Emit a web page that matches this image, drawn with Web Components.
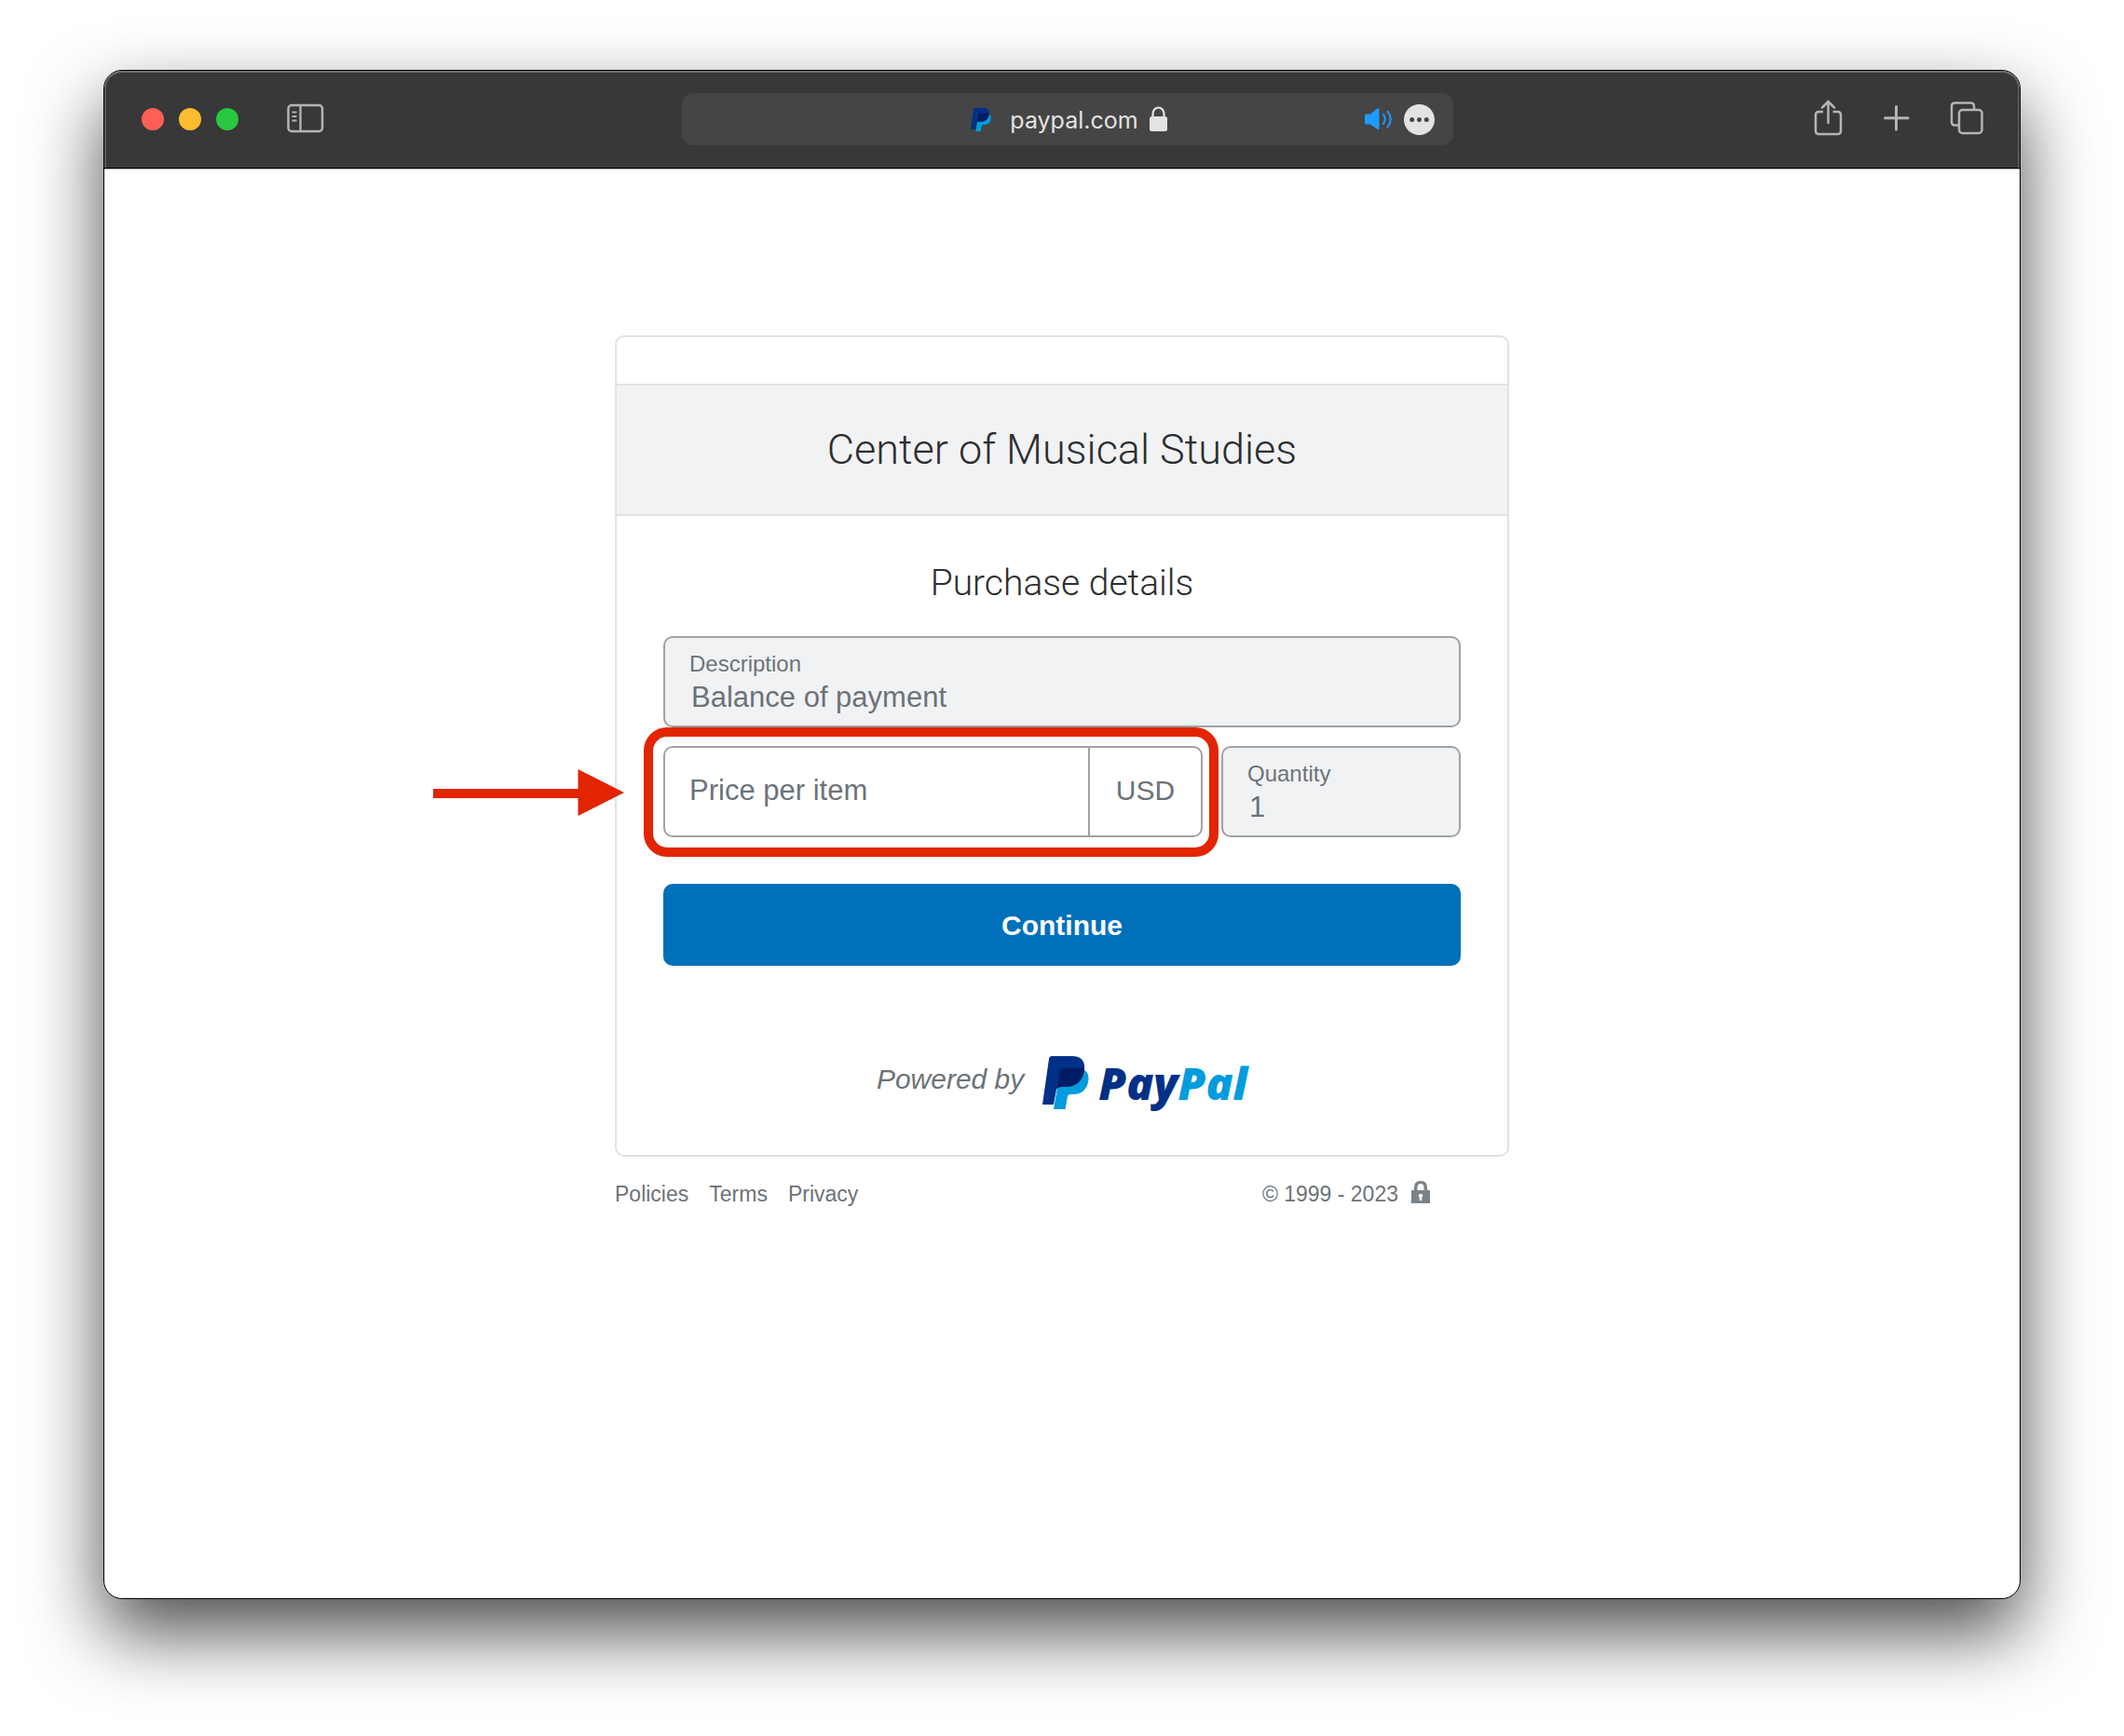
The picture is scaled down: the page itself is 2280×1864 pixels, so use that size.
<!DOCTYPE html>
<html lang="en">
<head>
<meta charset="utf-8">
<title>PayPal – Center of Musical Studies</title>
<style>
  html { background: #fff; }
  body {
    margin: 0;
    min-height: 100vh;
    box-sizing: border-box;
    padding: 75px 111px 147px;
    display: flex;
    font-family: "Liberation Sans", Arial, sans-serif;
    color: #6c7378;
  }
</style>
</head>
<body>
<browser-window>
  <browser-toolbar slot="toolbar" host="paypal.com"></browser-toolbar>
  <payment-page></payment-page>
</browser-window>

<script>
const define = (name, html, setup) => customElements.define(name, class extends HTMLElement {
  constructor() {
    super();
    this.attachShadow({ mode: 'open' }).innerHTML = html;
  }
  connectedCallback() { if (setup) setup(this, this.shadowRoot); }
});

/* PayPal double-P mark */
define('paypal-mark', `
<style>
  :host { display: block; flex: none; width: 50px; height: 57px; }
  svg { display: block; width: 100%; height: 100%; }
</style>
<svg viewBox="0 0 50 57" aria-hidden="true">
  <path fill="#009cde" d="M20 14H44C49 17 50.500 22 49 28C47 37 41 41 33 41H30Q27.500 41 27 43L24.500 57H12L16 34Z"/>
  <path fill="#003087" d="M7 3Q7.500 0 10 0H32C42 0 46 6 45 14C44 26 36 33 25 33H20Q16 33 15 36L12 52H0Z"/>
  <path fill="#001c64" d="M21 13H45C44.500 26 36 33 25 33H20Q17 33 15.500 35L18.500 15.500Q19 13 21 13Z"/>
</svg>`);

define('paypal-logo', `
<style>
  :host { display: flex; align-items: flex-start; gap: 10px; }
  .word {
    font: italic 800 48px/57px "Open Sans", Lato, sans-serif;
    color: #003087;
  }
  .pal { color: #009cde; }
</style>
<paypal-mark></paypal-mark>
<span class="word">Pay<span class="pal">Pal</span></span>`);

define('browser-window', `
<style>
  :host {
    display: flex; flex-direction: column; flex: 1;
    box-sizing: border-box;
    border: 1px solid #000;
    border-radius: 20px;
    background: #fff;
    box-shadow: 0 36px 80px rgba(0, 0, 0, .7);
    overflow: hidden;
  }
  main { flex: 1; }
</style>
<slot name="toolbar"></slot>
<main><slot></slot></main>`);

define('browser-toolbar', `
<style>
  :host {
    display: grid;
    grid-template-columns: 1fr minmax(0, 828px) 1fr;
    align-items: center;
    box-sizing: border-box;
    height: 105px;
    padding: 0 28px 0 40px;
    background: #383838;
    border-bottom: 1px solid #000;
    border-radius: 19px 19px 0 0;
    box-shadow: inset 0 2px #6e6e6e, inset 2px 0 #595959, inset -2px 0 #595959, 0 1px #b4b4b4;
  }
  button { all: unset; display: block; cursor: pointer; }
  svg { display: block; }
  .left, .lights, .right, .host, .tools { display: flex; align-items: center; }
  .left { gap: 50px; }
  .lights { gap: 16px; }
  .lights button { width: 24px; height: 24px; border-radius: 50%; background: var(--c); }
  .right { justify-content: flex-end; gap: 35px; padding-bottom: 2px; }
  .url {
    display: grid; grid-template-columns: 1fr auto 1fr; align-items: center;
    height: 56px; border-radius: 12px; background: #454545;
  }
  .host { grid-column: 2; gap: 12px; padding-left: 4px; font: 25px/32px Inter, sans-serif; color: #e3e3e3; }
  #host { padding-top: 2px; }
  .host paypal-mark { width: 22px; height: 25px; margin-right: 8px; }
  .tools { justify-content: flex-end; gap: 12px; padding-right: 20px; }
</style>
<div class="left">
  <div class="lights">
    <button style="--c:#ff5f57" aria-label="Close"></button>
    <button style="--c:#febc2e" aria-label="Minimise"></button>
    <button style="--c:#28c840" aria-label="Zoom"></button>
  </div>
  <button aria-label="Sidebar">
    <svg width="42" height="34" viewBox="0 0 42 34" fill="none" stroke="#b4b4b4">
      <rect x="3.500" y="2" width="36.500" height="28" rx="3.500" stroke-width="2.500"/>
      <path d="M16.500 2V30" stroke-width="2.400"/>
      <path d="M7.500 9.500H12.500M7.500 14H12.500M7.500 18.500H12.500" stroke-width="1.800"/>
    </svg>
  </button>
</div>
<div class="url">
  <div class="host">
    <paypal-mark></paypal-mark>
    <span id="host"></span>
    <svg width="20" height="28" viewBox="0 0 20 28" aria-hidden="true">
      <rect y="11" width="19" height="16" rx="2.500" fill="#e3e3e3"/>
      <path d="M3.500 12V8A6 6.500 0 0 1 15.500 8V12" fill="none" stroke="#e3e3e3" stroke-width="2.200"/>
    </svg>
  </div>
  <div class="tools">
    <button aria-label="Mute tab">
      <svg width="30" height="24" viewBox="0 0 30 24">
        <path fill="#1e9bff" d="M1.500 6.500H6L13 .800Q15.500-.500 15.500 2V21.500Q15.500 24 13 22.500L6 17.500H1.500Q0 17.500 0 16V8Q0 6.500 1.500 6.500Z"/>
        <path d="M20 7Q23.500 12 20 17M24.500 3.500Q31 12 24.500 20.500" fill="none" stroke="#1e9bff" stroke-width="2" stroke-linecap="round"/>
      </svg>
    </button>
    <button aria-label="Page menu">
      <svg width="33" height="33" viewBox="0 0 33 33">
        <circle cx="16.500" cy="16.500" r="16.500" fill="#e3e3e3"/>
        <g fill="#454545"><circle cx="8.700" cy="16.500" r="2.500"/><circle cx="16.500" cy="16.500" r="2.500"/><circle cx="24.300" cy="16.500" r="2.500"/></g>
      </svg>
    </button>
  </div>
</div>
<div class="right">
  <button aria-label="Share">
    <svg width="40" height="40" viewBox="0 0 40 40" fill="none" stroke="#b4b4b4" stroke-width="2.500">
      <path d="M15 13H10.500Q7 13 7 16.500V33.500Q7 37 10.500 37H30.500Q34 37 34 33.500V16.500Q34 13 30.500 13H25.500"/>
      <path d="M20.500 25V3M14 8.500L20.500 2L27 8.500" stroke-linecap="round"/>
    </svg>
  </button>
  <button aria-label="New tab">
    <svg width="40" height="40" viewBox="0 0 40 40" stroke="#b4b4b4" stroke-width="3" stroke-linecap="round">
      <path d="M18.500 7.500V32M6.500 19.700H31"/>
    </svg>
  </button>
  <button aria-label="Tab overview">
    <svg width="48" height="40" viewBox="0 0 48 40" fill="none" stroke="#b4b4b4" stroke-width="2.500">
      <path d="M27 11V7Q27 3.500 23.500 3.500H6.500Q3 3.500 3 7V24Q3 27.500 6.500 27.500H10"/>
      <rect x="11" y="11" width="24.500" height="25" rx="3.500"/>
    </svg>
  </button>
</div>`, (el, root) => { root.getElementById('host').textContent = el.getAttribute('host'); });

/* One bordered form field. A locked field stacks the label over its value. */
define('form-field', `
<style>
  :host {
    display: flex; align-items: stretch;
    box-sizing: border-box; height: 98px;
    border: 2px solid #9da3a6; border-radius: 10px;
    background: #fff; color: #6c7378;
    overflow: hidden;
  }
  :host([locked]) { background: #f1f2f4; }
  .body { flex: 1; min-width: 0; display: flex; align-items: center; padding: 0 26px 2px; gap: 12px; font-size: 31px; line-height: 36px; }
  :host([locked]) .body { flex-direction: column; align-items: stretch; justify-content: center; gap: 4px; padding: 2px 26px 0; }
  :host([locked]) label { font-size: 24px; line-height: 28px; }
  label { white-space: nowrap; }
  input {
    flex: 1; min-width: 0; width: 100%; box-sizing: border-box;
    border: 0; outline: 0; background: none; margin: 0; padding: 0;
    font: inherit; color: inherit;
  }
  :host([locked]) input { flex: none; height: 36px; padding-left: 2px; }
</style>
<div class="body"><label for="field"></label><input id="field" type="text"></div>
<slot></slot>`, (el, root) => {
  root.querySelector('label').textContent = el.getAttribute('label');
  const input = root.querySelector('input');
  input.value = el.getAttribute('value') || '';
  input.readOnly = el.hasAttribute('locked');
});

define('unit-tag', `
<style>
  :host {
    display: flex; align-items: center; justify-content: center;
    box-sizing: border-box; flex: none; width: 121px; padding-bottom: 2px;
    border-left: 2px solid #9da3a6;
    font-size: 30px; line-height: 36px;
  }
</style>
<slot></slot>`);

/* Red ring and arrow laid over the element it wraps */
define('call-out', `
<style>
  :host { display: block; position: relative; }
  .ring {
    position: absolute; inset: -20px -17px -21px -21px;
    border: 10px solid #e22400; border-radius: 25px;
    pointer-events: none;
  }
  svg { position: absolute; right: calc(100% + 42px); top: 25px; }
</style>
<slot></slot>
<div class="ring"></div>
<svg width="205" height="50" viewBox="0 0 205 50" fill="#e22400" aria-hidden="true">
  <path d="M0 21H155.500V0L205 25L155.500 50V31H0Z"/>
</svg>`);

define('site-footer', `
<style>
  :host { display: flex; justify-content: space-between; padding: 24px 85px 0 0; font-size: 23px; line-height: 32px; }
  nav { display: flex; gap: 22px; }
  a { color: inherit; text-decoration: none; }
  .legal { display: flex; align-items: center; gap: 14px; }
</style>
<nav><a href="#policies">Policies</a><a href="#terms">Terms</a><a href="#privacy">Privacy</a></nav>
<div class="legal"><span>© 1999 - 2023</span>
  <svg width="20" height="28" viewBox="0 0 20 28" aria-hidden="true">
    <path fill="#7b8388" d="M0 10H3V7Q3 0 10 0T17 7V10H20V24H0ZM6.500 10H13.500V7Q13.500 3 10 3T6.500 7ZM8.700 21H11.300V17.500Q12.300 17 12.300 15.800Q12 13.800 10 13.800T7.700 15.800Q7.700 17 8.700 17.500Z" fill-rule="evenodd"/>
  </svg>
</div>`);

define('payment-page', `
<style>
  :host { display: block; max-width: 960px; margin: 0 auto; padding: 179px 24px 24px; }
  .card { border: 2px solid #e1e2e3; border-radius: 10px; padding-top: 50px; }
  h1, h2 { margin: 0; font-family: Roboto, "Liberation Sans", sans-serif; font-weight: 300; color: #2c2e2f; text-align: center; }
  h1 {
    padding: 41px 24px; font-size: 45px; line-height: 56px;
    background: #f1f2f4; border: solid #e1e2e3; border-width: 2px 0;
  }
  form { padding: 48px 50px 49px; }
  h2 { font-size: 39px; line-height: 48px; margin-bottom: 33px; }
  .row { display: grid; grid-template-columns: minmax(0, 1fr) 257px; gap: 20px; margin-top: 20px; }
  button {
    display: block; width: 100%; height: 88px; margin-top: 50px; padding: 2px 0 0;
    border: 0; border-radius: 10px; background: #0070ba; color: #fff;
    font: bold 30px/36px "Liberation Sans", sans-serif; cursor: pointer;
  }
  .powered { display: flex; justify-content: center; gap: 20px; margin-top: 97px; font-size: 30px; line-height: 50px; font-style: italic; }
</style>
<section class="card">
  <h1>Center of Musical Studies</h1>
  <form>
    <h2>Purchase details</h2>
    <form-field label="Description" value="Balance of payment" locked></form-field>
    <div class="row">
      <call-out><form-field label="Price per item"><unit-tag>USD</unit-tag></form-field></call-out>
      <form-field label="Quantity" value="1" locked></form-field>
    </div>
    <button type="button">Continue</button>
    <div class="powered"><span>Powered by</span><paypal-logo></paypal-logo></div>
  </form>
</section>
<site-footer></site-footer>`);
</script>
</body>
</html>
